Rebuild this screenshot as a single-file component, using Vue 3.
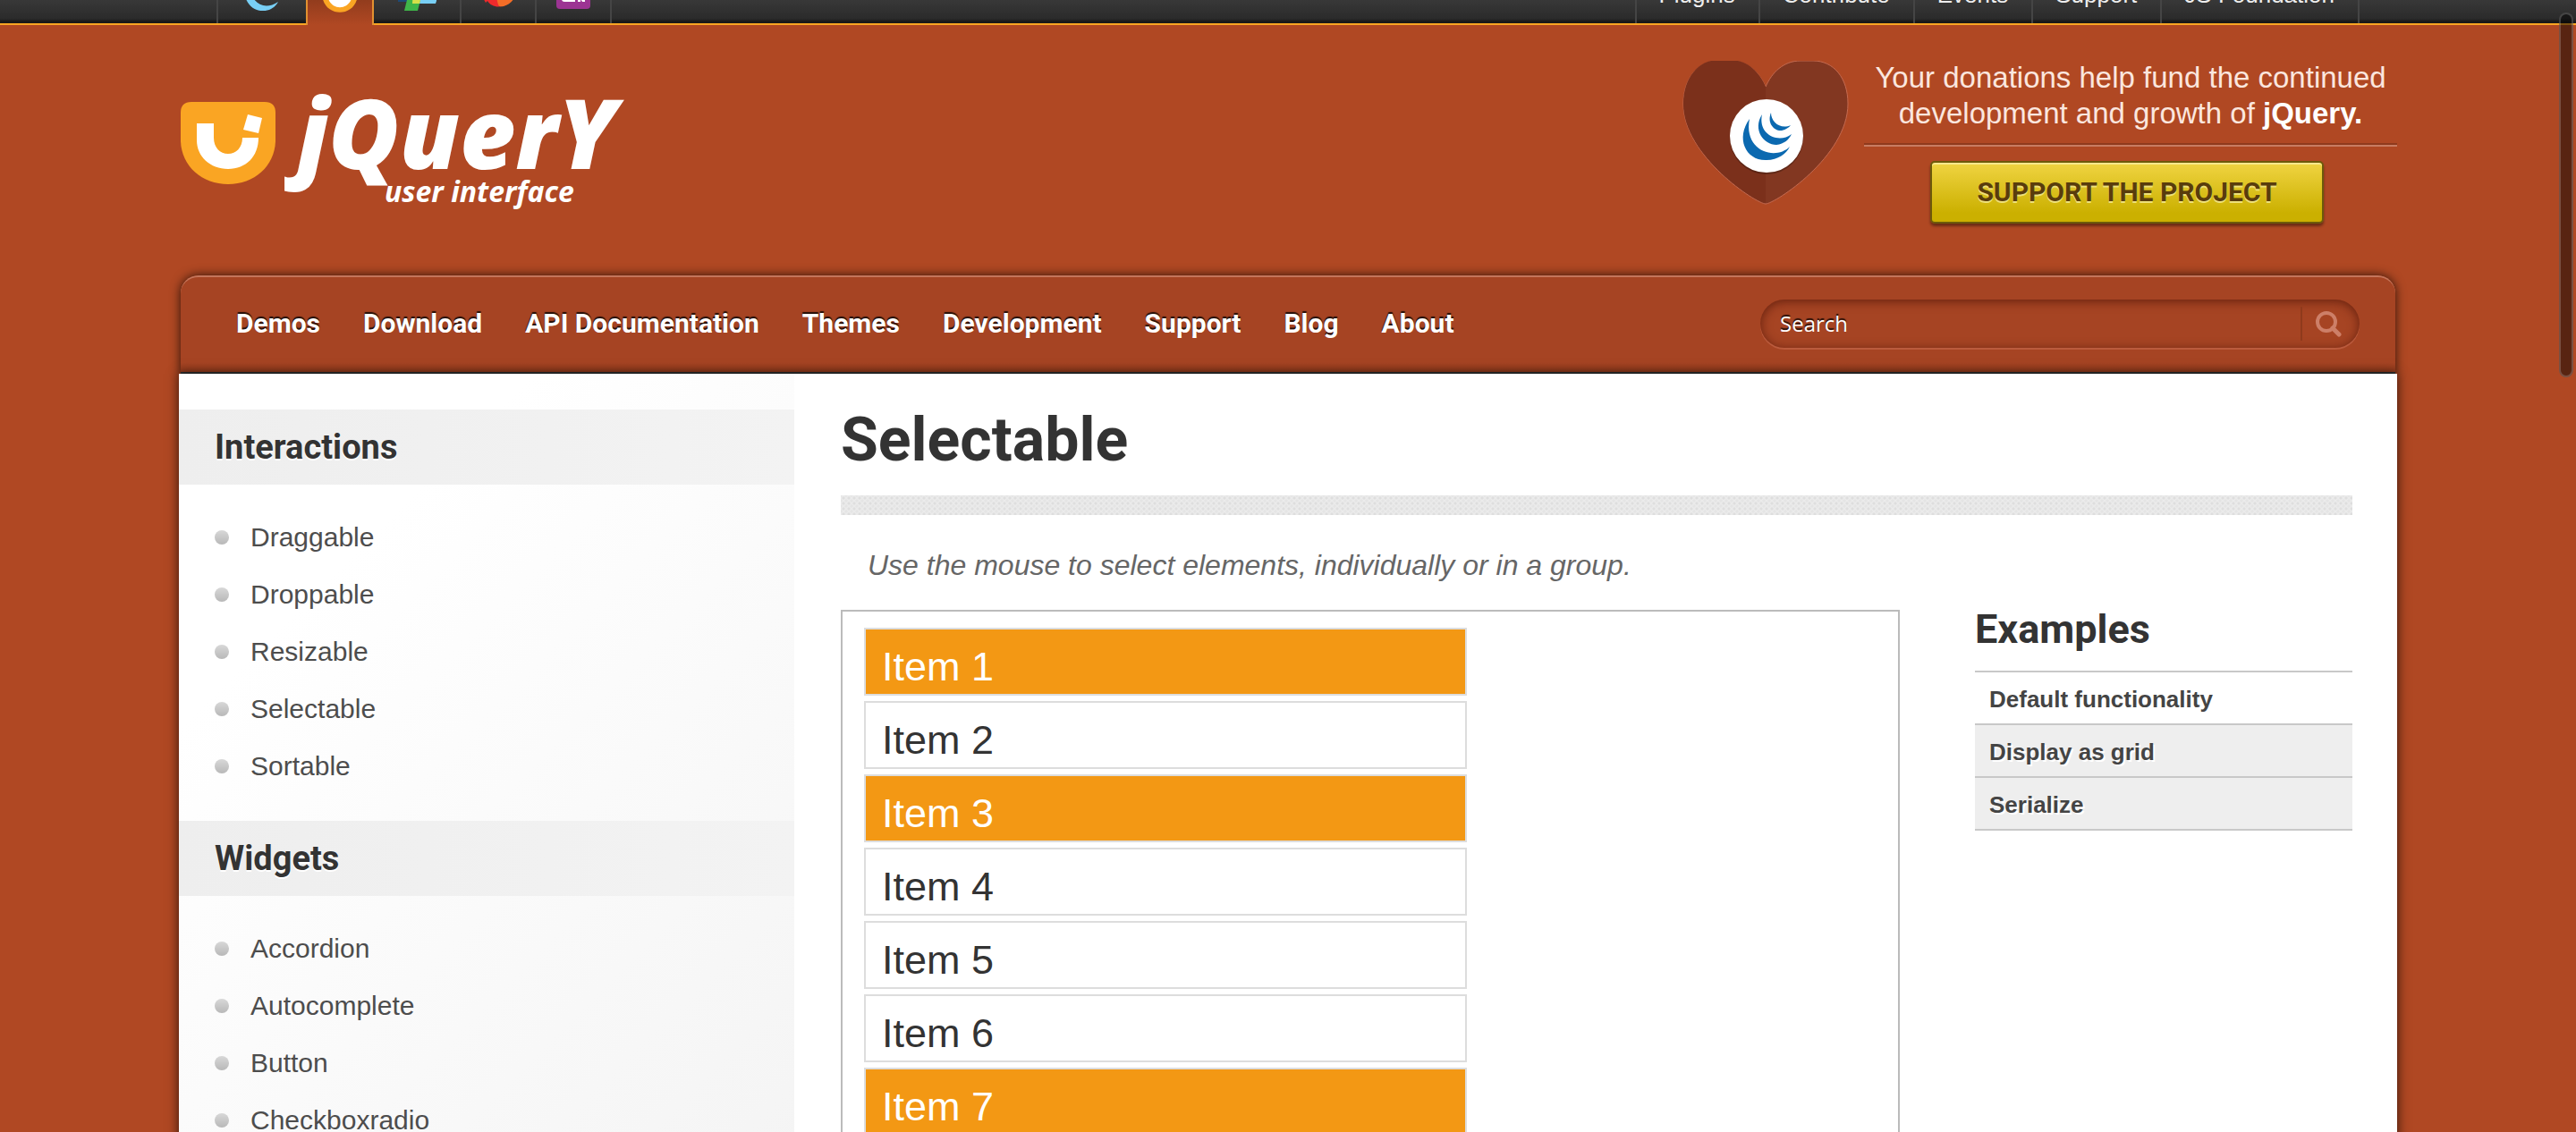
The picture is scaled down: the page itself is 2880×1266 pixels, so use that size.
<script setup>
const projects = ['jquery', 'jqueryui', 'jquerymobile', 'sizzle', 'qunit']
const globalLinks = ['Plugins', 'Contribute', 'Events', 'Support', 'JS Foundation']
const siteLinks = ['Demos', 'Download', 'API Documentation', 'Themes', 'Development', 'Support', 'Blog', 'About']
const sections = [
  { title: 'Interactions', links: ['Draggable', 'Droppable', 'Resizable', 'Selectable', 'Sortable'] },
  { title: 'Widgets', links: ['Accordion', 'Autocomplete', 'Button', 'Checkboxradio'] },
]
const selected = [1, 3, 7]
const examples = ['Default functionality', 'Display as grid', 'Serialize']
</script>

<template>
  <div class="page">
    <header class="global">
      <nav class="projects" aria-label="Projects">
        <a v-for="p in projects" :key="p" href="#" :class="['project', p, { active: p === 'jqueryui' }]" :aria-label="p">
          <svg v-if="p === 'jquery'" width="44" height="44" viewBox="0 0 44 44">
            <path d="M3 28 C9 49 33 48 40 34 C28 42 17 39 11 28 Z" fill="#78cff5" />
          </svg>
          <svg v-else-if="p === 'jqueryui'" width="44" height="44" viewBox="0 0 44 44">
            <path d="M2 0 H42 V22 C42 51 2 51 2 22 Z" fill="#faa523" />
            <path d="M8 0 V24 C10 43 34 43 36 24 V20 H28 C27 32 17 32 16 20 V0 Z" fill="#fff" />
          </svg>
          <svg v-else-if="p === 'jquerymobile'" width="48" height="44" viewBox="0 0 48 44">
            <path d="M3 29 H18 L16 34 H3 Z" fill="#1d4a78" />
            <path d="M14 28 H46 V33 L45 36 H22 Z" fill="#78cff5" />
            <path d="M16 20 H31 L25 44 H10 Z" fill="#3fb549" />
            <path d="M20 20 H31 L27 36 H19 Z" fill="#d6e04a" />
          </svg>
          <svg v-else-if="p === 'sizzle'" width="44" height="44" viewBox="0 0 44 44">
            <path d="M3 28 L8 37 L10 35 C16 45 34 44 41 28 Z" fill="#ee2a2c" />
            <path d="M20 30 C22 41 22 42 28 41 C35 39 40 34 41 28 Z" fill="#f36d27" />
          </svg>
          <svg v-else width="40" height="40" viewBox="0 0 40 40">
            <path d="M1 0 H39 V36 Q39 40 35 40 H5 Q1 40 1 36 Z" fill="#9c3493" />
            <path d="M7 20 H22 V32 H10 Q7 32 7 29 Z M25 20 H33 V32 H30 L28 29 V32 H25 Z" fill="#fff" />
          </svg>
        </a>
      </nav>
      <nav class="links" aria-label="Global">
        <a v-for="l in globalLinks" :key="l" href="#">{{ l }}</a>
      </nav>
    </header>

    <div class="container">
      <div class="banner">
        <a class="logo" href="#" aria-label="jQuery user interface">
          <svg class="mark" width="106" height="92" viewBox="0 0 106 92">
            <path d="M0 12 Q0 0 12 0 H94 Q106 0 106 12 V44 C105 72 82 92 53 92 C24 92 1 72 0 44 Z" fill="#faa523" />
            <path d="M18 24 H37 V40 C37 51 44 58 53 58 C62 58 69 51 69 40 H87 C87 61 73 75 53 75 C33 75 18 61 18 43 Z" fill="#fff" />
            <path d="M75 14 L91 18 L87 35 L70 31 Z" fill="#fff" />
          </svg>
          <span class="words">
            <span class="word">jQuer<span class="tail">y</span></span>
            <span class="sub">user interface</span>
          </span>
        </a>
        <aside class="donate">
          <svg class="heart" width="186" height="162" viewBox="0 0 186 162">
            <path d="M93 161 C83 161 1 108 1 49 C1 20 18 1 40 1 H54 C73 1 86 14 93 30 C100 14 113 1 132 1 H146 C169 1 185 20 185 49 C185 108 103 161 93 161 Z" fill="#823721" stroke="#c46a50" stroke-width="1" />
            <path d="M93 160 C83 160 1 107 1 49 C1 20 18 0 40 0 H54 C73 0 86 14 93 30 Z" fill="#7b301b" />
            <path d="M30 0 H64 V1 H30 Z M124 0 H158 V1 H124 Z" fill="#b04823" />
            <circle cx="94" cy="87" r="41" fill="#000" opacity="0.25" />
            <circle cx="94" cy="85" r="41" fill="#fff" />
            <path d="M75 66 C59 88 71 113 94 112 C107 112 116 105 120 97 C104 113 68 102 75 66 Z" fill="#0b69b0" />
            <path d="M89 61 C78 78 91 95 105 95 C114 94 119 89 122 83 C108 94 84 84 89 61 Z" fill="#0b69b0" />
            <path d="M99 59 C94 71 103 80 111 79 Q118 77 121 73 C110 78 99 70 99 59 Z" fill="#0b69b0" />
          </svg>
          <div class="appeal">
            <p>Your donations help fund the continued development and growth of <strong>jQuery.</strong></p>
            <button type="button">SUPPORT THE PROJECT</button>
          </div>
        </aside>
      </div>

      <nav class="site" aria-label="Site">
        <div class="menu">
          <a v-for="l in siteLinks" :key="l" href="#">{{ l }}</a>
        </div>
        <form class="search" @submit.prevent>
          <input type="text" placeholder="Search" aria-label="Search" />
          <button type="submit" aria-label="Search">
            <svg width="30" height="30" viewBox="0 0 30 30">
              <circle cx="13" cy="13" r="10" fill="none" stroke="#cd7f68" stroke-width="4" />
              <path d="M20 20 L27 27" stroke="#cd7f68" stroke-width="5" stroke-linecap="round" />
            </svg>
          </button>
        </form>
      </nav>

      <div class="content">
        <aside class="sidebar">
          <section v-for="s in sections" :key="s.title">
            <h3>{{ s.title }}</h3>
            <ul>
              <li v-for="l in s.links" :key="l"><a href="#">{{ l }}</a></li>
            </ul>
          </section>
        </aside>
        <main>
          <h1>Selectable</h1>
          <div class="rule"></div>
          <p class="desc">Use the mouse to select elements, individually or in a group.</p>
          <div class="demo">
            <div class="frame">
              <ol>
                <li v-for="n in 7" :key="n" :class="{ selected: selected.includes(n) }">Item {{ n }}</li>
              </ol>
            </div>
            <section class="examples">
              <h2>Examples</h2>
              <ul>
                <li v-for="(e, i) in examples" :key="e" :class="{ current: i === 0 }"><a href="#">{{ e }}</a></li>
              </ul>
            </section>
          </div>
        </main>
      </div>
    </div>
    <div class="scrollbar"></div>
  </div>
</template>

<style>
body {
  margin: 0;
  background: #b04823;
}
</style>

<style scoped>
.page {
  position: relative;
  height: 100vh;
  overflow: hidden;
  background: #b04823;
  font-family: "Liberation Sans", Arial, sans-serif;
  color: #333;
}
a {
  color: inherit;
  text-decoration: none;
}
h1, h2, h3, ul, ol, p {
  margin: 0;
  padding: 0;
}
ul, ol {
  list-style: none;
}
h1, h2, h3, .menu, .donate button {
  font-family: Roboto, "Noto Sans", sans-serif;
  font-weight: 700;
}
svg {
  display: block;
}

.global {
  box-sizing: border-box;
  display: flex;
  justify-content: space-between;
  height: 28px;
  padding: 0 242px;
  background: linear-gradient(#383838, #2b2b2b 80%, #191919 92%);
  border-bottom: 2px solid #faa523;
}
.projects, .links {
  display: flex;
}
.project {
  box-sizing: border-box;
  display: flex;
  justify-content: center;
  align-items: flex-end;
  width: 84px;
  height: 26px;
  padding-bottom: 16px;
  border-right: 2px solid #454545;
}
.jquery {
  width: 100px;
  padding-bottom: 14px;
  border-left: 2px solid #454545;
  border-right: 0;
}
.jqueryui {
  width: 76px;
  height: 28px;
  padding-bottom: 14px;
  border: 2px solid #e29130;
  border-width: 0 2px;
  background: linear-gradient(#923c1d, #b04823);
}
.jquerymobile {
  width: 98px;
  padding-bottom: 14px;
}
.links a {
  box-sizing: border-box;
  height: 48px;
  margin-top: -22px;
  padding: 0 26px 0 25px;
  border-left: 2px solid #454545;
  color: #eee;
  font-size: 26px;
  line-height: 32px;
}
.links a:last-child {
  border-right: 2px solid #454545;
}

.container {
  margin: 0 200px;
}
.banner {
  display: flex;
  justify-content: space-between;
  height: 280px;
}
.logo {
  display: flex;
  gap: 24px;
  padding: 86px 0 0 2px;
  color: #fff;
  font-style: italic;
}
.words {
  display: flex;
  flex-direction: column;
  margin-top: -28px;
}
.word {
  font-family: "Open Sans", sans-serif;
  font-weight: 800;
  font-size: 108px;
  line-height: 124px;
}
.tail {
  text-transform: uppercase;
}
.sub {
  padding-left: 98px;
  margin-top: -14px;
  font-family: "Noto Sans", sans-serif;
  font-weight: 700;
  font-size: 32px;
  line-height: 36px;
}
.donate {
  display: flex;
  gap: 17px;
  padding-top: 39px;
}
.appeal {
  width: 596px;
  text-align: center;
}
.appeal p {
  padding: 0 4px 13px;
  border-bottom: 2px solid #8f3a1d;
  box-shadow: 0 2px #c87c62;
  color: #fbe6de;
  font-size: 33px;
  line-height: 40px;
}
.appeal strong {
  color: #fff;
}
.appeal button {
  box-sizing: border-box;
  width: 440px;
  height: 70px;
  margin: 18px 8px 0 0;
  padding: 0;
  border: 2px solid #6d5a0a;
  border-radius: 5px;
  background: linear-gradient(#f0d442, #cbb000 85%);
  box-shadow: 0 3px 3px rgba(0, 0, 0, 0.4), inset 0 2px #f8e88c;
  color: #593c0c;
  font-size: 30px;
  line-height: 40px;
  text-shadow: 0 2px #eee07a;
}

.site {
  box-sizing: border-box;
  display: flex;
  align-items: center;
  justify-content: space-between;
  height: 110px;
  margin: 0 2px;
  padding: 0 40px 2px 38px;
  border-top: 2px solid #c4755b;
  border-bottom: 2px solid #333;
  border-radius: 20px 20px 0 0;
  background: linear-gradient(#a64423, #a64423 90%, #953b1c);
  box-shadow: 0 0 12px rgba(0, 0, 0, 0.75);
}
.menu {
  display: flex;
  color: #fff;
  font-size: 30px;
  line-height: 40px;
  text-shadow: 0 -2px 1px rgba(0, 0, 0, 0.8);
}
.menu a {
  padding: 0 24px;
}
.search {
  box-sizing: border-box;
  display: flex;
  align-items: center;
  width: 670px;
  height: 54px;
  padding: 0 18px 0 22px;
  border-radius: 27px;
  background: #a64423;
  box-shadow: inset 0 2px 12px rgba(60, 10, 0, 0.6), 0 2px #bb5b3d;
}
.search input {
  flex: 1;
  min-width: 0;
  padding: 0;
  border: 0;
  outline: 0;
  background: none;
  color: #fff;
  font: 24px/36px "Open Sans", sans-serif;
  text-shadow: 0 -2px 1px rgba(0, 0, 0, 0.8);
}
.search input::placeholder {
  color: #fff;
  opacity: 1;
}
.search button {
  height: 38px;
  padding: 0 2px 0 14px;
  border: 0;
  border-left: 2px solid #8f3a1c;
  background: none;
}

.content {
  position: relative;
  display: flex;
  height: 900px;
  background: #fff;
  box-shadow: 0 0 12px rgba(0, 0, 0, 0.75);
}
.sidebar {
  width: 688px;
  padding-top: 40px;
  background: linear-gradient(135deg, #fff 25%, #f4f4f4);
}
.sidebar h3 {
  padding: 20px 40px;
  background: linear-gradient(90deg, #eee, #f3f3f3);
  font-size: 38px;
  line-height: 44px;
  text-shadow: 0 2px #fff;
}
.sidebar ul {
  padding: 27px 0 29px 40px;
}
.sidebar li {
  display: flex;
  align-items: center;
  gap: 24px;
  height: 64px;
  color: #4d4d4d;
  font-size: 30px;
}
.sidebar li::before {
  content: "";
  width: 16px;
  height: 16px;
  border-radius: 8px;
  background: linear-gradient(#d8d8d8, #b8b8b8);
}

main {
  flex: 1;
  padding: 40px 50px 0 52px;
}
h1 {
  font-size: 68px;
  line-height: 68px;
}
.rule {
  height: 22px;
  margin-top: 28px;
  background-color: #ebebeb;
  background-image: radial-gradient(circle, #dedede 1px, transparent 2px), radial-gradient(circle, #e4e4e4 1px, transparent 2px);
  background-size: 6px 6px, 6px 6px;
  background-position: 0 0, 3px 3px;
}
.desc {
  padding: 36px 30px 30px;
  color: #666;
  font-size: 32px;
  line-height: 40px;
  font-style: italic;
}
.demo {
  display: flex;
  gap: 84px;
}
.frame {
  box-sizing: border-box;
  flex: 1;
  height: 700px;
  padding: 18px 24px;
  border: 2px solid #bbb;
}
.frame li {
  box-sizing: border-box;
  width: 674px;
  height: 76px;
  margin-bottom: 6px;
  padding: 16px 18px 0;
  border: 2px solid #ddd;
  font-size: 45px;
  line-height: 52px;
}
.frame .selected {
  background: #f39814;
  color: #fff;
}
.examples {
  width: 422px;
}
.examples h2 {
  padding-bottom: 24px;
  font-size: 45px;
  line-height: 44px;
}
.examples ul {
  border-top: 2px solid #c8c8c8;
}
.examples li {
  height: 57px;
  padding: 0 16px;
  border-bottom: 2px solid #c8c8c8;
  background: #eee;
  color: #444;
  font-size: 26px;
  line-height: 60px;
  font-weight: 700;
  text-shadow: 2px 2px #fff;
}
.examples .current {
  background: #fff;
}

.scrollbar {
  position: absolute;
  top: 14px;
  right: 3px;
  box-sizing: border-box;
  width: 16px;
  height: 408px;
  border: 2px solid rgba(255, 255, 255, 0.2);
  border-radius: 8px;
  background: rgba(0, 0, 0, 0.5);
}
</style>
